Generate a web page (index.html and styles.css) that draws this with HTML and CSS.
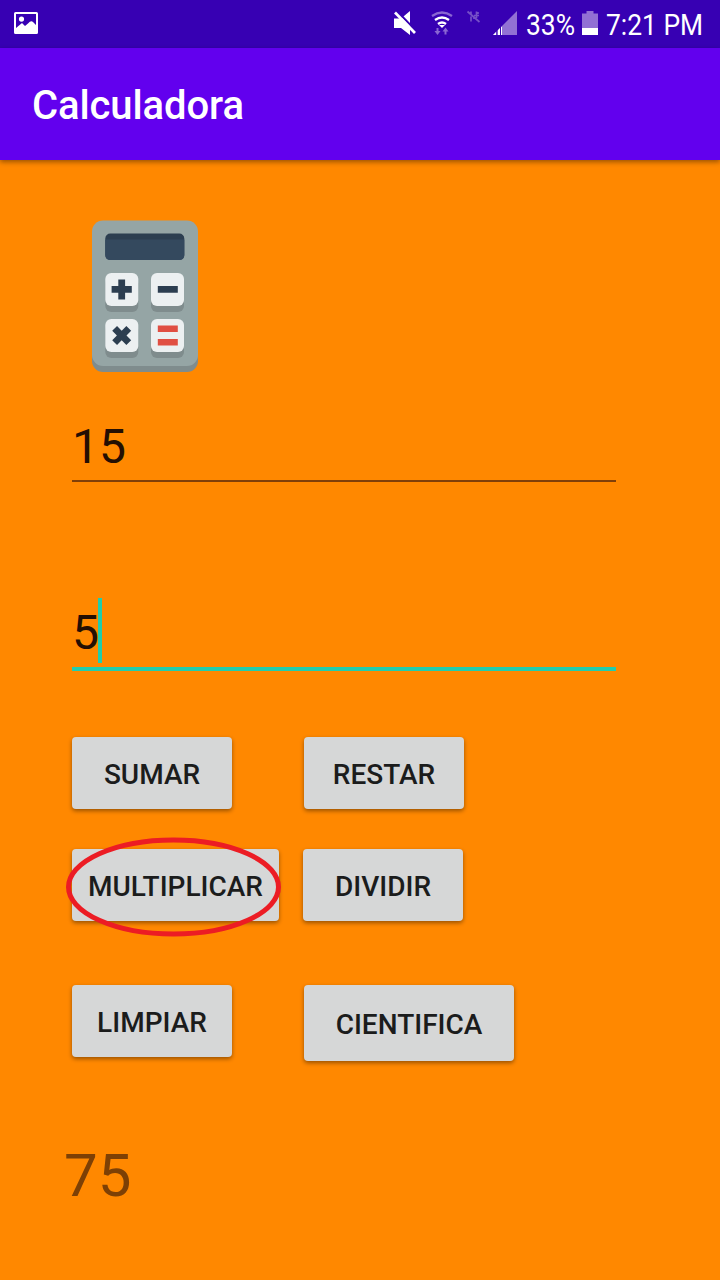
FILE: index.html
```html
<!DOCTYPE html>
<html lang="es">
<head>
<meta charset="utf-8">
<title>Calculadora</title>
<link rel="stylesheet" href="styles.css">
</head>
<body>
<header class="status">
  <svg class="status-photo" width="24" height="22" viewBox="0 0 24 22"><path fill="#fff" fill-rule="evenodd" d="M1.500 0H22.500Q24 0 24 1.500V20.500Q24 22 22.500 22H1.500Q0 22 0 20.500V1.500Q0 0 1.500 0ZM2 2V16L5 13.500L8 11L11 14L14 11.500Q17 8 19 10L22 13V2ZM7.500 4.500A2.600 2.600 0 1 1 7.500 9.700A2.600 2.600 0 1 1 7.500 4.500Z"/></svg>
  <svg class="status-icons" width="130" height="48" viewBox="390 0 130 48">
    <path fill="#fff" d="M394 18.500h7l9-7.500v24l-9-7h-7z"/>
    <path stroke="#3700b3" stroke-width="2.200" d="M396 10l21 22"/>
    <path stroke="#fff" stroke-width="2.700" d="M395 12.500l20 20.500"/>
    <g fill="none" stroke-width="2.300">
      <path stroke="#8a66d2" d="M432 16q10-7 20 0"/>
      <path stroke="#fff" d="M435 20q7-5 14 0M438 24q4-3 8 0"/>
    </g>
    <path fill="#fff" d="M439 25h6l-3 3z"/>
    <path fill="#8a66d2" d="M436.500 28h2v3h2l-3 4-3-4h2zM444.500 34.500h2v-3h2l-3-4-3 4h2z"/>
    <path fill="none" stroke="#7650c7" stroke-width="1.700" d="M467.500 11.500l12 10.500M471 16.500v5M471 11.500v2.500M474 17.500v1.500M476.500 11.500v6.500M474 15.500h5M478 12v2"/>
    <path fill="#9270d4" d="M517 11v24h-24z"/>
    <path fill="#fff" d="M493 35l3-3v3zM497.500 35v-4.500l2.500-2.500v7zM500.800 35v-7.500l1.200-1v8.500z"/>
    <path stroke="#3700b3" stroke-width="1" d="M497 28v7M500.500 25v10"/>
  </svg>
  <span class="status-text percent">33%</span>
  <svg class="battery" width="16" height="24" viewBox="0 0 16 24"><path fill="#9270d4" d="M4.500 0h7v2.500H16V17H0V2.500h4.500z"/><path fill="#fff" d="M0 17h16v7H0z"/></svg>
  <span class="status-text clock">7:21 PM</span>
</header>
<div class="appbar"><h1 class="title">Calculadora</h1></div>
<main class="content">
  <svg class="logo" width="106" height="152" viewBox="0 0 106 152">
    <rect y="8" width="106" height="144" rx="11" fill="#7f8c8d"/>
    <rect y="0.500" width="106" height="145.500" rx="11" fill="#95a5a5"/>
    <rect x="13.300" y="13.500" width="79" height="26.500" rx="5" fill="#2c3e50"/>
    <path fill="#34495e" d="M13.300 19.500h79V35q0 5-5 5h-69q-5 0-5-5z"/>
    <g fill="#7f8c8d"><rect x="13.300" y="58" width="33" height="34" rx="6"/><rect x="59" y="58" width="33" height="34" rx="6"/><rect x="13.300" y="104" width="33" height="34" rx="6"/><rect x="59" y="104" width="33" height="34" rx="6"/></g>
    <g fill="#ecf0f1"><rect x="13.300" y="53" width="33" height="33" rx="6"/><rect x="59" y="53" width="33" height="33" rx="6"/><rect x="13.300" y="99" width="33" height="33" rx="6"/><rect x="59" y="99" width="33" height="33" rx="6"/></g>
    <g fill="#2c3e50">
      <path d="M26.300 59.500h6.800v6.600h6.700v6.700h-6.700v6.600h-6.800v-6.600h-6.700v-6.700h6.700zM65.800 66.100h20v6.700h-20z"/>
      <path transform="rotate(45 29.700 115.500)" d="M26.300 105.500h6.800v6.600h6.600v6.800h-6.600v6.600h-6.800v-6.600h-6.600v-6.800h6.600z"/>
    </g>
    <path fill="#e04f43" d="M65.800 105.500h20v6.500h-20zM65.800 119h20v6.500h-20z"/>
  </svg>
  <div class="field">15</div>
  <div class="field active">5<i class="caret"></i></div>
  <div class="row">
    <button class="btn">SUMAR</button>
    <button class="btn restar">RESTAR</button>
  </div>
  <div class="row second">
    <div class="marked">
      <button class="btn wide">MULTIPLICAR</button>
      <svg class="ring" width="216" height="100" viewBox="0 0 216 100"><ellipse cx="107.500" cy="50" rx="105" ry="47" fill="none" stroke="#ec1c24" stroke-width="5"/></svg>
    </div>
    <button class="btn dividir">DIVIDIR</button>
  </div>
  <div class="row third">
    <button class="btn">LIMPIAR</button>
    <button class="btn science">CIENTIFICA</button>
  </div>
  <div class="result">75</div>
</main>
</body>
</html>
```
FILE: styles.css
```css
* { box-sizing: border-box; }
body {
  margin: 0;
  width: 720px;
  height: 1280px;
  overflow: hidden;
  background: #ff8800;
  font-family: Roboto, sans-serif;
}
.status {
  display: flex;
  height: 48px;
  background: #3700b3;
  color: #fff;
}
.status svg { flex: none; }
.status-photo { margin: 12px 352px 0 14px; }
.status-text {
  flex: none;
  font-size: 30px;
  line-height: 50px;
  white-space: nowrap;
  transform: scaleX(.88);
  transform-origin: 0 0;
}
.percent { width: 56px; margin-left: 6px; }
.battery { margin: 11px 0 0; }
.clock { width: 110px; margin-left: 8px; }
.appbar {
  position: relative;
  display: flex;
  align-items: center;
  height: 112px;
  padding: 4px 0 0 32px;
  background: #6200ee;
  box-shadow: 0 2px 5px rgba(0, 0, 0, .4);
}
.title {
  margin: 0;
  color: #fff;
  font-size: 40px;
  font-weight: 500;
  line-height: 48px;
  letter-spacing: -.1px;
}
.content {
  display: flex;
  flex-direction: column;
  align-items: flex-start;
  padding: 60px 0 0 72px;
}
.logo { margin: 0 0 38px 20px; }
.field {
  display: flex;
  width: 544px;
  height: 72px;
  border-bottom: 2px solid #803f08;
  color: #240f03;
  font-size: 48px;
  line-height: 74px;
}
.active {
  height: 75px;
  margin: 114px 0 66px;
  border-bottom: 4px solid #22cdad;
}
.caret {
  width: 4px;
  height: 65px;
  margin: 2px 0 0 -1px;
  background: #22cdad;
}
.row { display: flex; height: 72px; }
.btn {
  flex: none;
  width: 160px;
  height: 72px;
  padding: 3px 0 0;
  border: 0;
  border-radius: 4px;
  background: #d6d7d7;
  box-shadow: 0 2px 4px rgba(0, 0, 0, .4);
  color: #1b1c1c;
  font: 500 28px/33px Roboto, sans-serif;
}
.restar { margin-left: 72px; }
.second { margin-top: 40px; }
.marked { position: relative; }
.wide { width: 207px; }
.ring {
  position: absolute;
  left: -6px;
  top: -12px;
}
.dividir { margin-left: 24px; }
.third { height: 76px; margin-top: 64px; }
.science { width: 210px; height: 76px; margin-left: 72px; }
.result {
  height: 70px;
  margin: 80px 0 0 -8px;
  color: #7d4005;
  font-size: 60px;
  line-height: 70px;
}
```
